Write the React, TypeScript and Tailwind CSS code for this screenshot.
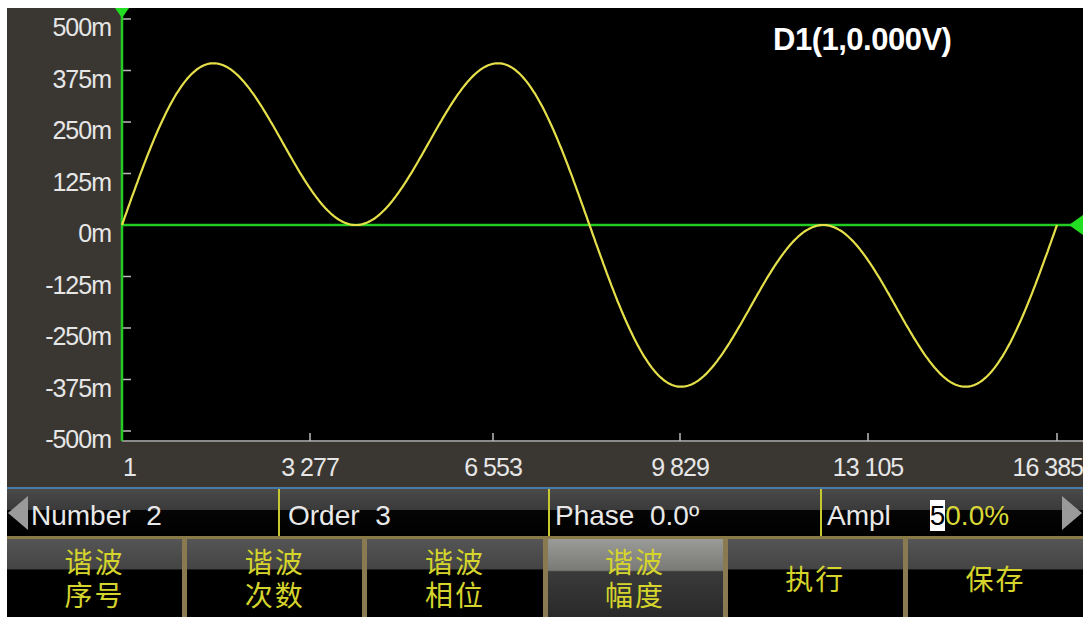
import React from "react";

const PX = 0.412;
const X0 = 115, W = 961, Z = 217;

function wave() {
  const pts: string[] = [];
  const xs = 122 - 7, xe = 1057 - 7;
  for (let i = 0; i <= 600; i++) {
    const t = i / 600;
    const th = 2 * Math.PI * t;
    const v = 255 * (Math.sin(th) + Math.sin(3 * th));
    pts.push(`${(xs + (xe - xs) * t).toFixed(1)},${(Z - v * PX).toFixed(1)}`);
  }
  return pts.join(" ");
}

const ylabels = ["500m", "375m", "250m", "125m", "0m", "-125m", "-250m", "-375m", "-500m"];
const xlabels: [string, number][] = [["1", 116], ["3 277", 303], ["6 553", 486], ["9 829", 673], ["13 105", 861], ["16 385", 1076]];

const buttons = [["谐波", "序号"], ["谐波", "次数"], ["谐波", "相位"], ["谐波", "幅度"], ["执行"], ["保存"]];

export default function App() {
  const font = { fontFamily: '"Liberation Sans", Arial, sans-serif' };
  const cjk = { fontFamily: '"Noto Sans CJK SC", "Noto Sans", sans-serif' };
  return (
    <div className="w-[1087px] h-[623px] bg-white pl-[7px] pr-[4px] pt-[8px] overflow-hidden" style={font}>
      <div className="w-[1076px] bg-[#3a3732]">
        <svg width="1076" height="479" className="block">
          <rect x="0" y="0" width="1076" height="479" fill="#3a3732" />
          <rect x={X0} y="0" width={W} height="433" fill="#000" />
          <line x1={X0} y1="433" x2={1076} y2="433" stroke="#8a8a8a" strokeWidth="2" />
          {ylabels.map((l, i) => {
            const y = 11 + i * 51.5;
            return (
              <g key={l}>
                <line x1={X0} y1={y} x2={X0 + 9} y2={y} stroke="#bbb" strokeWidth="1.5" />
                <text x="104" y={y + 17} textAnchor="end" fill="#e6e6e6" fontSize="25" letterSpacing="-1">{l}</text>
              </g>
            );
          })}
          {[303, 486, 673, 861, 1050].map((x) => (
            <line key={x} x1={x} y1="425" x2={x} y2="433" stroke="#bbb" strokeWidth="1.5" />
          ))}
          {xlabels.map(([l, x], i) => (
            <text key={l} x={x} y="468" textAnchor={i === 5 ? "end" : i === 0 ? "start" : "middle"} fill="#e6e6e6" fontSize="25" letterSpacing="-1">{l}</text>
          ))}
          <line x1={X0} y1="0" x2={X0} y2="433" stroke="#22cc22" strokeWidth="2.5" />
          <line x1={X0} y1={Z} x2={1070} y2={Z} stroke="#22cc22" strokeWidth="2.5" />
          <polygon points={`${X0 - 7},0 ${X0 + 7},0 ${X0},10`} fill="#22dd22" />
          <polygon points={`1062,${Z} 1076,${Z - 10} 1076,${Z + 10}`} fill="#22dd22" />
          <polyline points={wave()} fill="none" stroke="#e5e04a" strokeWidth="2.2" />
          <text x="766" y="42" fill="#fff" fontSize="31" fontWeight="bold" letterSpacing="-0.5">D1(1,0.000V)</text>
        </svg>
        <div className="h-[2px] bg-[#4a7aa8]" />
        <div className="relative flex h-[47px] bg-[linear-gradient(#4a4a4a_0%,#3a3a3a_45%,#050505_45%,#000_100%)] text-[28px] text-[#e8e8e8] items-center">
          <div className="w-0 h-0 ml-[1px] border-y-[17px] border-y-transparent border-r-[20px] border-r-[#9a9a9a]" />
          <div className="w-[250px] pl-[3px] whitespace-pre leading-none pt-[6px]">Number  2</div>
          <div className="w-[2px] self-stretch bg-[#c8c830]" />
          <div className="w-[268px] pl-[8px] whitespace-pre leading-none pt-[6px]">Order  3</div>
          <div className="w-[2px] self-stretch bg-[#c8c830]" />
          <div className="w-[270px] pl-[5px] whitespace-pre leading-none pt-[6px]">Phase  0.0º</div>
          <div className="w-[2px] self-stretch bg-[#c8c830]" />
          <div className="flex-1 pl-[5px] whitespace-pre leading-none pt-[6px]">
            {"Ampl     "}<span className="bg-white text-black">5</span><span className="text-[#d8d838]">0.0%</span>
          </div>
          <div className="w-0 h-0 mr-[1px] border-y-[17px] border-y-transparent border-l-[20px] border-l-[#9a9a9a]" />
        </div>
        <div className="h-[3px] bg-[#8a7a48]" />
        <div className="grid grid-cols-6 gap-[5px] h-[78px] bg-[#8a7a52]" style={cjk}>
          {buttons.map((b, i) => (
            <div
              key={i}
              className={
                "flex flex-col items-center justify-center text-[#d4d42c] text-[28px] leading-[33px] " +
                (i === 3
                  ? "bg-[linear-gradient(#9a9a96_0%,#7a7a76_40%,#3a3a3a_42%,#2a2a2a_100%)]"
                  : "bg-[linear-gradient(#555_0%,#444_38%,#000_40%,#000_100%)]")
              }
            >
              {b.map((s) => (
                <span key={s} className="tracking-[2px]">{s}</span>
              ))}
            </div>
          ))}
        </div>
      </div>
    </div>
  );
}
